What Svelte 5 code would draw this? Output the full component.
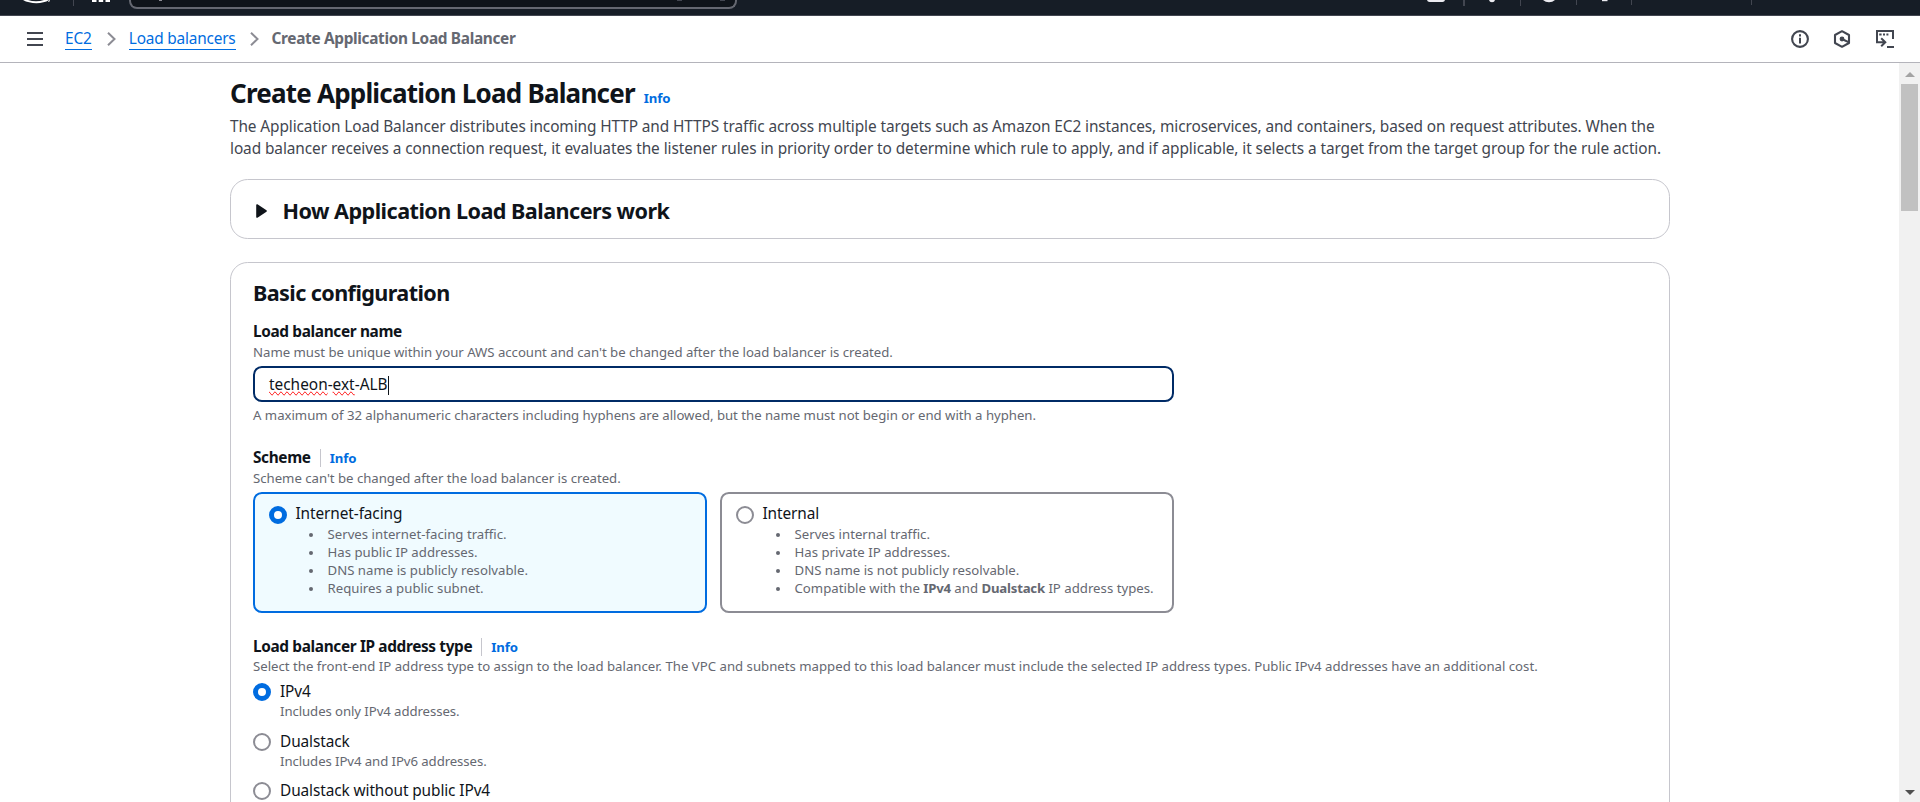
<script>
  const schemes = [
    {
      label: 'Internet-facing',
      checked: true,
      points: ['Serves internet-facing traffic.', 'Has public IP addresses.', 'DNS name is publicly resolvable.', 'Requires a public subnet.']
    },
    {
      label: 'Internal',
      checked: false,
      points: ['Serves internal traffic.', 'Has private IP addresses.', 'DNS name is not publicly resolvable.', 'Compatible with the *IPv4* and *Dualstack* IP address types.']
    }
  ];
  const ipTypes = [
    { label: 'IPv4', note: 'Includes only IPv4 addresses.', checked: true },
    { label: 'Dualstack', note: 'Includes IPv4 and IPv6 addresses.', checked: false },
    { label: 'Dualstack without public IPv4', note: '', checked: false }
  ];
</script>

{#snippet chevron()}
  <svg class="chevron" width="9" height="14" viewBox="0 0 9 14"><path d="M1 .8 7.5 7 1 13.2" fill="none" stroke="#8c8c94" stroke-width="2" /></svg>
{/snippet}

<div class="page">
  <header class="topbar">
    <svg class="logo" width="73" height="16" viewBox="0 0 73 16">
      <path d="M23 0C30 4.2 43 4.2 49 0H44C39 1.6 33 1.6 28 0Z" fill="#fff" />
      <path d="M49.4 0 48.7 2" stroke="#fff" stroke-width="1" />
    </svg>
    <i class="sep"></i>
    <svg class="apps" width="18" height="2"><path d="M0 0H4.5V2H0ZM6.7 0H11.2V2H6.7ZM13.5 0H18V2H13.5Z" fill="#fff" /></svg>
    <div class="search">
      <svg width="4" height="1"><rect width="3" height="1" fill="#8c8c94" /></svg>
      <span class="keys"><i></i><i></i></span>
    </div>
    <div class="tools">
      <svg width="18" height="3"><path d="M0 0H18Q17.5 2 15.5 2H2.5Q.5 2 0 0Z" fill="#ebebf0" /></svg>
      <i class="sep wide"></i>
      <svg width="6" height="3"><path d="M0 0H6Q5.5 2.2 3 2.2T0 0Z" fill="#ebebf0" /></svg>
      <i class="sep"></i>
      <svg width="12" height="3"><path d="M0 0H12Q9.5 2.2 6 2.2T0 0Z" fill="#ebebf0" /></svg>
      <i class="sep short"></i>
      <svg width="6" height="3"><rect width="5.5" height="1.2" fill="#ebebf0" /></svg>
      <i class="sep short"></i>
      <i class="sep short last"></i>
    </div>
  </header>

  <nav class="crumbs">
    <svg class="burger" width="16" height="14" viewBox="0 0 16 14"><path d="M0 1H16M0 7H16M0 13H16" stroke="#424650" stroke-width="1.8" /></svg>
    <a class="ec2" href="#ec2">EC2</a>
    {@render chevron()}
    <a class="lbs" href="#load-balancers">Load balancers</a>
    {@render chevron()}
    <b>Create Application Load Balancer</b>
    <div class="panel-icons">
      <svg width="18" height="18" viewBox="0 0 18 18"><circle cx="9" cy="9" r="7.9" fill="none" stroke="#424650" stroke-width="2.1" /><path d="M9 4.3V6.4M9 7.8V13.4" stroke="#424650" stroke-width="2" /></svg>
      <svg width="18" height="18" viewBox="0 0 18 18"><path d="M9 1.2 16 5V13L9 16.8 2 13V5Z" fill="none" stroke="#424650" stroke-width="2.1" stroke-linejoin="round" /><circle cx="9" cy="9" r="2.4" fill="#424650" /><path d="M9 9 16 12.4" stroke="#424650" stroke-width="2.1" /></svg>
      <svg width="18" height="18" viewBox="0 0 18 18"><path d="M1 12.5V1H17V9M0 12.2H8.5M5.2 8.2 9.3 12.2 5.2 16.2M11 17H18" fill="none" stroke="#424650" stroke-width="2" /><path d="M3.2 4.4H5.6M7 4.4H9M10.4 4.4H12.4" stroke="#424650" stroke-width="2" /></svg>
    </div>
  </nav>

  <div class="body">
    <main>
      <div class="title">
        <h1>Create Application Load Balancer</h1>
        <a class="info" href="#info">Info</a>
      </div>
      <p class="lead">The Application Load Balancer distributes incoming HTTP and HTTPS traffic across multiple targets such as Amazon EC2 instances, microservices, and containers, based on request attributes. When the<br /><span>load balancer receives a connection request, it evaluates the listener rules in priority order to determine which rule to apply, and if applicable, it selects a target from the target group for the rule action.</span></p>

      <section class="card how">
        <svg width="11" height="14" viewBox="0 0 11 14"><path d="M1 1 10 7 1 13Z" fill="#0f141a" stroke="#0f141a" stroke-width="1.6" stroke-linejoin="round" /></svg>
        <h2>How Application Load Balancers work</h2>
      </section>

      <section class="card config">
        <h2 class="basic">Basic configuration</h2>

        <div class="field name">
          <div class="label">Load balancer name</div>
          <p class="hint">Name must be unique within your AWS account and can't be changed after the load balancer is created.</p>
          <div class="input"><span class="typo">techeon</span>-<span class="typo">ext</span>-ALB<i class="caret"></i></div>
          <p class="hint">A maximum of 32 alphanumeric characters including hyphens are allowed, but the name must not begin or end with a hyphen.</p>
        </div>

        <div class="field scheme">
          <div class="label">Scheme<a class="info ruled" href="#scheme">Info</a></div>
          <p class="hint">Scheme can't be changed after the load balancer is created.</p>
          <div class="tiles">
            {#each schemes as s}
              <div class="tile" class:on={s.checked}>
                <i class="radio" class:on={s.checked}></i>
                <div>
                  <div class="option">{s.label}</div>
                  <ul>
                    {#each s.points as p}
                      <li>{#each p.split('*') as part, i}{#if i % 2}<b>{part}</b>{:else}{part}{/if}{/each}</li>
                    {/each}
                  </ul>
                </div>
              </div>
            {/each}
          </div>
        </div>

        <div class="field iptype">
          <div class="label">Load balancer IP address type<a class="info ruled" href="#ip-type">Info</a></div>
          <p class="hint long">Select the front-end IP address type to assign to the load balancer. The VPC and subnets mapped to this load balancer must include the selected IP address types. Public IPv4 addresses have an additional cost.</p>
          <div class="choices">
            {#each ipTypes as t}
              <div class="choice">
                <i class="radio" class:on={t.checked}></i>
                <div>
                  <div class="option">{t.label}</div>
                  <p class="hint">{t.note}</p>
                </div>
              </div>
            {/each}
          </div>
        </div>
      </section>
    </main>

    <div class="scrollbar">
      <svg width="10" height="5"><path d="M0 5 5 0 10 5Z" fill="#a3a3a3" /></svg>
      <div class="thumb"></div>
      <svg class="down" width="10" height="5"><path d="M0 0H10L5 5Z" fill="#505050" /></svg>
    </div>
  </div>
</div>

<style>
  :global(body) { margin: 0; background: #fff; overflow: hidden; }
  .page { width: 1920px; height: 802px; overflow: hidden; display: flex; flex-direction: column; background: #fff; color: #0f141a; font: 400 15.4px/22px 'Noto Sans', sans-serif; letter-spacing: -0.1px; box-sizing: border-box; }
  .page :is(div, section, header, nav, i, main) { box-sizing: border-box; }
  h1, h2, p, ul { margin: 0; padding: 0; }
  h1, h2 { font-weight: 700; white-space: nowrap; }
  a { color: #006ce0; text-decoration: none; }
  svg { display: block; flex: none; }

  .topbar { height: 16px; flex: none; display: flex; align-items: flex-start; background: #161d26; border-bottom: 1px solid #424650; }
  .sep { width: 1px; height: 6px; background: #424650; }
  .apps { margin-left: 18px; }
  .search { margin-left: 19px; width: 608px; height: 9px; display: flex; justify-content: space-between; align-items: flex-start; padding: 0 10px 0 28px; background: #0f141a; border: 2px solid #656871; border-top: 0; border-radius: 0 0 8px 8px; }
  .keys { display: flex; gap: 38px; }
  .keys i { width: 5px; height: 1px; background: #424650; }
  .tools { margin-left: 690px; display: flex; align-items: flex-start; }
  .tools .sep { margin: 0 22px 0 25px; }
  .tools .sep.wide { width: 2px; margin: 0 24px 0 18px; }
  .tools .sep.short { height: 5px; margin: 0 25px 0 21px; }
  .tools .sep.short:nth-last-child(2) { margin: 0 0 0 23px; }
  .tools .sep.last { margin: 0 0 0 119px; }

  .crumbs { height: 47px; flex: none; display: flex; align-items: center; padding: 0 26px 0 27px; border-bottom: 1px solid #b4b4bb; }
  .burger { margin-right: 22px; }
  .crumbs a { border-bottom: 1px solid #006ce0; line-height: 20px; margin-top: 1px; }
  .crumbs .lbs { letter-spacing: -0.2px; }
  .crumbs b { font-weight: 700; color: #656871; letter-spacing: -0.33px; }
  .chevron { margin: 0 13px 0 15px; }
  .lbs + .chevron { margin-left: 14px; }
  .panel-icons { margin-left: auto; display: flex; gap: 24px 25px; }
  .panel-icons svg:first-child { margin-right: -1px; }

  .body { flex: 1; min-height: 0; display: flex; justify-content: space-between; }
  main { width: 1440px; margin-left: 230px; padding-top: 14px; }
  .title { display: flex; align-items: baseline; gap: 9px; height: 33px; }
  h1 { font-size: 26px; line-height: 33px; letter-spacing: -0.79px; }
  .info { font-size: 13.2px; font-weight: 700; letter-spacing: -0.1px; }
  .lead { margin-top: 6px; color: #424650; white-space: nowrap; }
  .lead span { letter-spacing: -0.082px; }
  .card { border: 1px solid #c6c6cd; border-radius: 17.6px; }
  .how { margin-top: 19px; height: 60px; display: flex; align-items: center; padding: 3px 0 0 25px; gap: 15.5px; }
  h2 { font-size: 21.6px; line-height: 26px; letter-spacing: -0.53px; }
  h2.basic { letter-spacing: -0.6px; }
  .config { margin-top: 23px; height: 800px; padding: 17px 22px; }
  .field { display: flex; flex-direction: column; }
  .label { font-weight: 700; letter-spacing: -0.36px; display: flex; align-items: center; }
  .info.ruled { border-left: 1px solid #c6c6cd; margin-left: 9px; padding-left: 9px; line-height: 18px; }
  .hint { font-size: 13.2px; line-height: 18px; height: 18px; letter-spacing: -0.02px; color: #656871; white-space: nowrap; }
  .hint.long { letter-spacing: 0; margin-top: -1px; }
  .name { margin-top: 15px; }
  .input { width: 921px; height: 36px; margin: 5px 0 4px; padding: 2px 0 0 14px; letter-spacing: 0; border: 2px solid #002b66; border-radius: 8.8px; display: flex; align-items: center; }
  .typo { text-decoration: spelling-error; }
  .caret { width: 1px; height: 19px; background: #0f141a; }
  .scheme { margin-top: 23px; }
  .tiles { width: 921px; margin-top: 5px; display: grid; grid-template-columns: 1fr 1fr; gap: 13px; }
  .tile { height: 121px; border: 2px solid #8c8c94; border-radius: 8.8px; display: flex; gap: 8.5px; padding: 8px 14px; }
  .tile.on { border-color: #006ce0; background: #f0fbff; }
  .option { height: 22px; line-height: 24px; white-space: nowrap; }
  .radio { flex: none; width: 18px; height: 18px; border: 2px solid #8c8c94; border-radius: 50%; background: #fff; margin-top: 4px; }
  .radio.on { border: 5.5px solid #006ce0; }
  ul { padding-left: 13px; list-style: none; color: #656871; font-size: 13.2px; line-height: 18px; letter-spacing: 0.01px; white-space: nowrap; margin-top: 1px; }
  li::before { content: ''; display: inline-block; width: 4px; height: 4px; margin-right: 15px; border-radius: 50%; background: #656871; vertical-align: 2.5px; }
  li b { font-weight: 700; letter-spacing: -0.2px; }
  .iptype { margin-top: 23px; }
  .choices { margin-top: 5px; }
  .choice { display: flex; gap: 9px; height: 49.5px; }
  .choice .hint { letter-spacing: -0.08px; }
  .choice .radio { margin-top: 3px; }

  .scrollbar { width: 21px; background: #f1f1f1; display: flex; flex-direction: column; align-items: center; padding: 9px 0 7px; }
  .thumb { width: 17px; height: 127px; margin-top: 7px; background: #c1c1c1; }
  .down { margin-top: auto; }
</style>
